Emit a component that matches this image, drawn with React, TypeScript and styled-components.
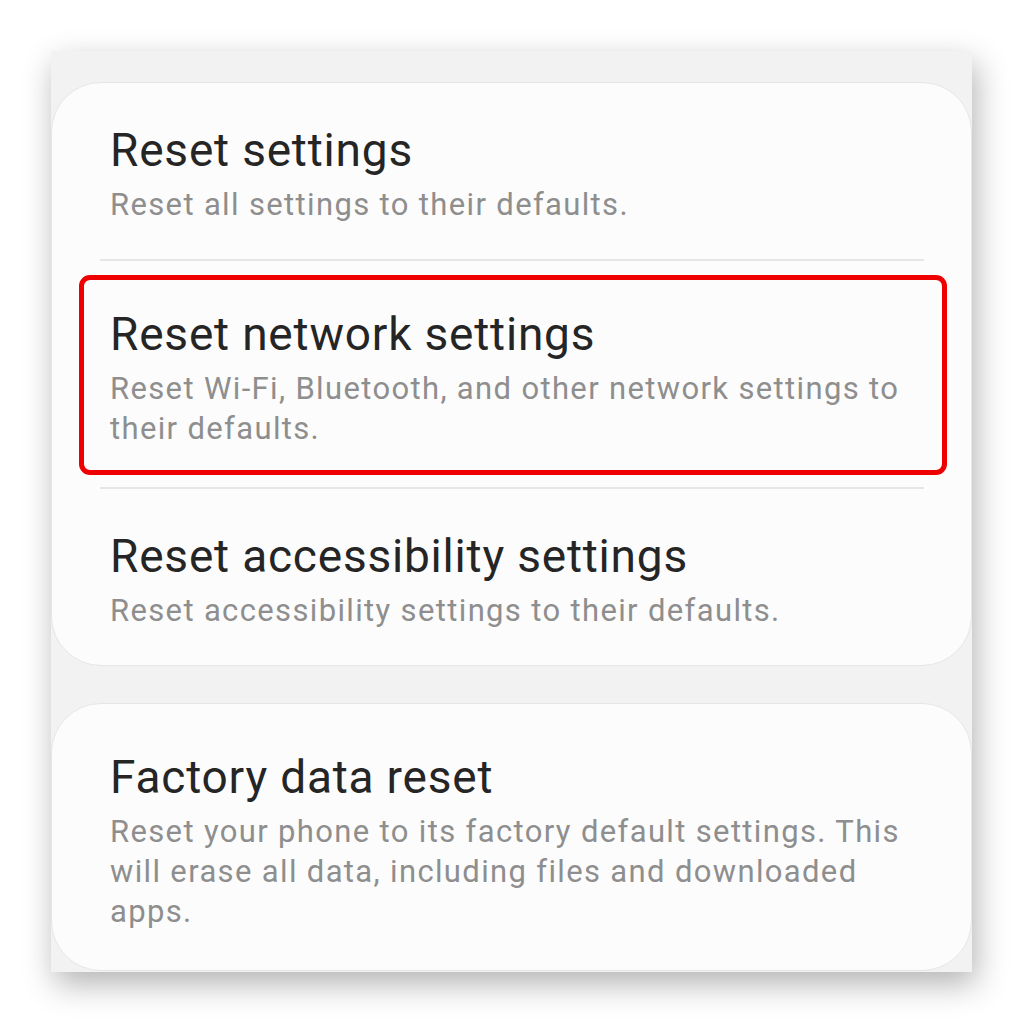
import React from 'react';
import styled, { createGlobalStyle } from 'styled-components';

const GlobalStyle = createGlobalStyle`
  html, body {
    margin: 0;
    padding: 0;
    background: #ffffff;
  }
  body {
    font-family: Roboto, "Noto Sans", "Liberation Sans", sans-serif;
  }
`;

const Page = styled.div`
  width: 1024px;
  height: 1024px;
  padding: 51px 0 0 51px;
  box-sizing: border-box;
`;

const Screen = styled.div`
  width: 921px;
  height: 921px;
  background: #f2f2f2;
  box-shadow: 4px 12px 30px rgba(0, 0, 0, 0.3);
  padding-top: 31px;
  box-sizing: border-box;
  display: flex;
  flex-direction: column;
  gap: 37px;
  overflow: hidden;
`;

const Card = styled.div`
  background: #fcfcfc;
  border: 1px solid #e6e6e6;
  border-radius: 50px;
  display: flex;
  flex-direction: column;
`;

const Item = styled.div<{ $multi?: boolean }>`
  position: relative;
  padding: ${p => (p.$multi ? '45px 58px 38px' : '39px 58px 34px')};
`;

const Divider = styled.div`
  height: 2px;
  margin: 0 47px 0 48px;
  background: #e6e6e6;
`;

const Title = styled.div`
  font-size: 46px;
  line-height: 56px;
  letter-spacing: 0.8px;
  color: #252525;
`;

const Subtitle = styled.div`
  margin-top: 7px;
  font-size: 31px;
  line-height: 40px;
  letter-spacing: 1.35px;
  color: #8e8e8e;
`;

const Highlight = styled.div`
  position: absolute;
  top: 14px;
  left: 27px;
  right: 24px;
  bottom: 12px;
  border: 5px solid #ee0000;
  border-radius: 11px;
  pointer-events: none;
`;

interface Row {
  title: string;
  text: string;
  multi?: boolean;
  marked?: boolean;
}

const resetRows: Row[] = [
  { title: 'Reset settings', text: 'Reset all settings to their defaults.' },
  {
    title: 'Reset network settings',
    text: 'Reset Wi-Fi, Bluetooth, and other network settings to their defaults.',
    multi: true,
    marked: true,
  },
  { title: 'Reset accessibility settings', text: 'Reset accessibility settings to their defaults.' },
];

const App: React.FC = () => {
  return (
    <Page>
      <GlobalStyle />
      <Screen>
        <Card>
          {resetRows.map((row, i) => (
            <React.Fragment key={row.title}>
              {i > 0 && <Divider />}
              <Item $multi={row.multi}>
                <Title>{row.title}</Title>
                <Subtitle>{row.text}</Subtitle>
                {row.marked && <Highlight />}
              </Item>
            </React.Fragment>
          ))}
        </Card>
        <Card>
          <Item $multi>
            <Title>Factory data reset</Title>
            <Subtitle>
              Reset your phone to its factory default settings. This will erase all data, including files and
              downloaded apps.
            </Subtitle>
          </Item>
        </Card>
      </Screen>
    </Page>
  );
};

export default App;
